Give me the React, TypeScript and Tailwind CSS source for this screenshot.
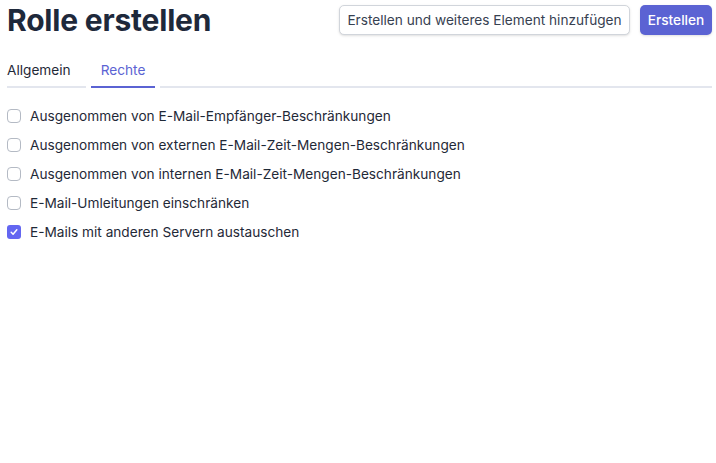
import React from "react";

const items = [
  { label: "Ausgenommen von E-Mail-Empfänger-Beschränkungen", checked: false },
  { label: "Ausgenommen von externen E-Mail-Zeit-Mengen-Beschränkungen", checked: false },
  { label: "Ausgenommen von internen E-Mail-Zeit-Mengen-Beschränkungen", checked: false },
  { label: "E-Mail-Umleitungen einschränken", checked: false },
  { label: "E-Mails mit anderen Servern austauschen", checked: true },
];

export default function App() {
  return (
    <div className="w-[716px] h-[463px] bg-white pl-[7px] pr-[4px] pt-[5px] font-['Inter',sans-serif] text-[#1f2937]">
      <div className="flex items-center justify-between h-[30px]">
        <h1 className="text-[30px] leading-[36px] font-bold text-[#1e293b] tracking-[-0.2px]">Rolle erstellen</h1>
        <div className="flex items-center gap-[10px]">
          <button className="h-[30px] w-[291px] rounded-[5px] border border-[#d1d5db] bg-white text-[13.65px] text-[#374151] shadow-sm">
            Erstellen und weiteres Element hinzufügen
          </button>
          <button className="h-[30px] w-[72px] rounded-[5px] bg-[#5b63d3] text-[13.65px] text-white font-medium shadow-sm">
            Erstellen
          </button>
        </div>
      </div>
      <div className="flex mt-[19px]">
        <div className="w-[79px] h-[34px] border-b-2 border-[#e3e6ee] text-[13.65px] text-[#1f2937] flex items-center">
          Allgemein
        </div>
        <div className="ml-[5px] w-[64px] h-[34px] border-b-2 border-[#5b63d3] text-[13.65px] text-[#5b63d3] flex items-center justify-center">
          Rechte
        </div>
        <div className="ml-[5px] flex-1 h-[34px] border-b-2 border-[#e3e6ee]" />
      </div>
      <div className="mt-[19px] flex flex-col gap-[11px]">
        {items.map((it) => (
          <label key={it.label} className="flex items-center h-[18px]">
            {it.checked ? (
              <span className="w-[14px] h-[14px] rounded-[3px] bg-[#6366f1] flex items-center justify-center">
                <svg width="10" height="10" viewBox="0 0 16 16" fill="none">
                  <path d="M3.5 8.5l3 3 6-7" stroke="white" strokeWidth="2.4" strokeLinecap="round" strokeLinejoin="round" />
                </svg>
              </span>
            ) : (
              <span className="w-[14px] h-[14px] rounded-[4px] border border-[#b4bac4] bg-white" />
            )}
            <span className="ml-[9px] text-[13.65px] text-[#1f2937]">{it.label}</span>
          </label>
        ))}
      </div>
    </div>
  );
}
